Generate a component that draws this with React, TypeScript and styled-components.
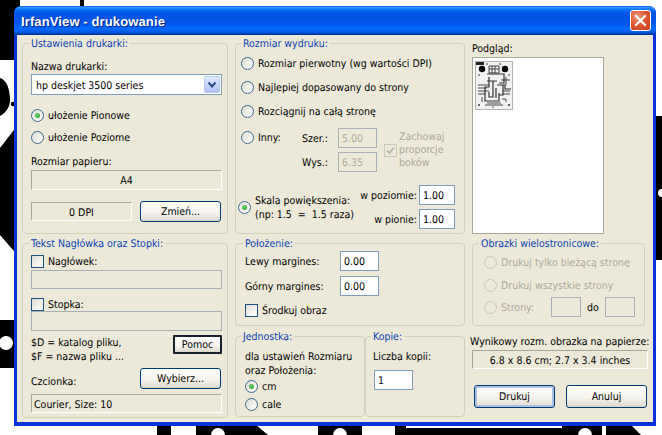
import React from "react";
import styled, { createGlobalStyle } from "styled-components";

const Global = createGlobalStyle`
  html, body { margin: 0; padding: 0; background: #fff; overflow: hidden; }
  * { box-sizing: border-box; }
`;

const Desktop = styled.div`
  position: relative;
  width: 662px;
  height: 435px;
  overflow: hidden;
  font-family: "DejaVu Sans Condensed", "DejaVu Sans", sans-serif;
  font-stretch: condensed;
  font-size: 10.5px;
  line-height: 14px;
  text-rendering: geometricPrecision;
  color: #000;
`;

const Wallpaper = styled.svg`
  position: absolute;
  inset: 0;
`;

const Win = styled.div`
  position: absolute;
  left: 14px;
  top: 6px;
  width: 642px;
  height: 420px;
  display: flex;
  flex-direction: column;
  background: #0831d9;
  border-radius: 7px 7px 0 0;
  overflow: hidden;
`;

const TitleBar = styled.div`
  height: 29px;
  flex: none;
  display: flex;
  align-items: center;
  justify-content: space-between;
  padding: 0 5px 0 7px;
  background: linear-gradient(180deg, #0058ee 0%, #3593ff 4%, #288eff 7%, #127dff 10%, #036ffc 14%, #0262ee 18%, #0057e5 24%, #0054e3 30%, #0055eb 56%, #005bf5 66%, #026afe 76%, #0062ef 86%, #0052d6 92%, #0040ab 96%, #003092 100%);
`;

const TitleText = styled.span`
  margin-top: 2px;
  font-family: "Liberation Sans", Arial, sans-serif;
  font-stretch: normal;
  font-weight: 700;
  font-size: 13px;
  letter-spacing: 0.12px;
  color: #fff;
  text-shadow: 1px 1px 1px #0a1f8f;
`;

const CloseButton = styled.div`
  width: 21px;
  height: 21px;
  display: flex;
  align-items: center;
  justify-content: center;
  border: 1px solid #fff;
  border-radius: 3px;
  background: radial-gradient(circle at 35% 30%, #ee9a7c 0%, #dd5a36 45%, #c63a17 100%);
`;

const Client = styled.div`
  flex: none;
  height: 387px;
  margin: 0 3px;
  padding: 2px 5px 0;
  display: flex;
  gap: 7px;
  background: #ece9d8;
`;

const Column = styled.div<{ $w: number; $gap?: number }>`
  width: ${(p) => p.$w}px;
  flex: none;
  display: flex;
  flex-direction: column;
  gap: ${(p) => p.$gap ?? 3}px;
`;

const Group = styled.fieldset<{ $h: number; $w?: number; $pad: number; $mt?: number }>`
  margin: ${(p) => p.$mt ?? 0}px 0 0;
  min-width: 0;
  height: ${(p) => p.$h}px;
  width: ${(p) => (p.$w ? `${p.$w}px` : "100%")};
  flex: none;
  padding: 0 0 0 ${(p) => p.$pad}px;
  border: 1px solid #d0d0bf;
  border-radius: 4px;
`;

const Legend = styled.legend<{ $x: number }>`
  margin-left: ${(p) => p.$x}px;
  padding: 0 2px;
  height: 12px;
  line-height: 14px;
  color: #0a3fb5;
`;

const Row = styled.div<{ $mt?: number; $h?: number; $w?: number }>`
  display: flex;
  align-items: center;
  margin-top: ${(p) => p.$mt ?? 0}px;
  height: ${(p) => p.$h ?? 14}px;
  ${(p) => (p.$w ? `width: ${p.$w}px;` : "")}
`;

const SpreadRow = styled(Row)`
  justify-content: space-between;
  align-items: flex-start;
`;

const Label = styled.div<{ $muted?: boolean; $w?: number; $end?: boolean; $ml?: number }>`
  white-space: nowrap;
  padding-top: 2px;
  color: ${(p) => (p.$muted ? "#aca899" : "#000")};
  margin-left: ${(p) => p.$ml ?? 0}px;
  ${(p) => (p.$w ? `width: ${p.$w}px; flex: none;` : "")}
  ${(p) => (p.$end ? "align-self: flex-end;" : "")}
`;

const Combo = styled.div`
  margin-top: 1px;
  height: 21px;
  width: 191px;
  display: flex;
  align-items: center;
  justify-content: space-between;
  background: #fff;
  border: 1px solid #7f9db9;
  padding: 0 1px 0 4px;
`;

const ComboText = styled.span`
  padding-top: 2px;
`;

const ComboArrow = styled.div`
  width: 16px;
  height: 17px;
  display: flex;
  align-items: center;
  justify-content: center;
  border-radius: 2px;
  border: 1px solid #b5c8ef;
  background: linear-gradient(180deg, #e1eafe 0%, #c3d3fb 60%, #aebff0 100%);
`;

const Static = styled.div<{ $w?: number; $h?: number; $left?: boolean; $mt?: number }>`
  width: ${(p) => p.$w ?? 191}px;
  height: ${(p) => p.$h ?? 20}px;
  margin-top: ${(p) => p.$mt ?? 0}px;
  flex: none;
  display: flex;
  align-items: center;
  justify-content: ${(p) => (p.$left ? "flex-start" : "center")};
  padding: 2px 2px 0;
  border: 1px solid;
  border-color: #aca899 #fff #fff #aca899;
  background: #ece9d8;
  white-space: nowrap;
`;

const Edit = styled.div<{ $w: number; $h?: number; $off?: boolean; $mt?: number; $ml?: number }>`
  width: ${(p) => p.$w}px;
  height: ${(p) => p.$h ?? 20}px;
  margin-top: ${(p) => p.$mt ?? 0}px;
  margin-left: ${(p) => p.$ml ?? 0}px;
  flex: none;
  display: flex;
  align-items: center;
  padding: 2px 3px 0;
  border: 1px solid ${(p) => (p.$off ? "#a9b0b4" : "#7f9db9")};
  background: ${(p) => (p.$off ? "#ece9d8" : "#fff")};
  color: ${(p) => (p.$off ? "#aca899" : "#000")};
`;

const Button = styled.div<{ $w?: number; $h?: number; $ml?: number; $mode?: "default" | "focus" }>`
  width: ${(p) => p.$w ?? 81}px;
  height: ${(p) => p.$h ?? 21}px;
  margin-left: ${(p) => p.$ml ?? 0}px;
  flex: none;
  display: flex;
  align-items: center;
  justify-content: center;
  padding-top: 1px;
  border: ${(p) => (p.$mode === "focus" ? "2px solid #16202a" : "1px solid #003c74")};
  border-radius: ${(p) => (p.$mode === "focus" ? "1px" : "3px")};
  background: linear-gradient(180deg, #fff 0%, #f5f4ee 55%, #e3e0d5 90%, #d6d0c5 100%);
  ${(p) => (p.$mode === "default" ? "box-shadow: inset 0 0 0 2px #a9bfe6;" : "")}
`;

const RadioOption = styled.div<{ $ml?: number; $w?: number }>`
  display: flex;
  align-items: center;
  gap: 4px;
  margin-left: ${(p) => p.$ml ?? 0}px;
  ${(p) => (p.$w ? `width: ${p.$w}px; flex: none;` : "")}
`;

const RadioMark = styled.span<{ $on?: boolean; $off?: boolean }>`
  width: 13px;
  height: 13px;
  flex: none;
  display: flex;
  align-items: center;
  justify-content: center;
  border-radius: 50%;
  border: 1px solid ${(p) => (p.$off ? "#cac8bb" : "#3d6a8c")};
  background: ${(p) => (p.$off ? "#ece9d8" : "linear-gradient(135deg, #dcdcd6 0%, #f4f3ee 60%, #fff 100%)")};
  &::after {
    content: "";
    display: ${(p) => (p.$on ? "block" : "none")};
    width: 5px;
    height: 5px;
    border-radius: 50%;
    background: radial-gradient(circle at 40% 40%, #64d064, #2aa02a);
  }
`;

const CheckMark = styled.span<{ $off?: boolean }>`
  width: 13px;
  height: 13px;
  flex: none;
  display: flex;
  align-items: center;
  justify-content: center;
  border: 1px solid ${(p) => (p.$off ? "#cac8bb" : "#1c5180")};
  background: ${(p) => (p.$off ? "#ece9d8" : "linear-gradient(135deg, #dcdcd6 0%, #f4f3ee 60%, #fff 100%)")};
`;

const OtherRow = styled.div`
  display: flex;
  margin-top: 10px;
  height: 44px;
`;

const OtherLead = styled.div`
  width: 61px;
  flex: none;
  height: 18px;
  display: flex;
  align-items: center;
`;

const SizeFields = styled.div`
  display: flex;
  flex-direction: column;
  gap: 4px;
  width: 75px;
  flex: none;
`;

const SizeField = styled.div`
  display: flex;
  align-items: center;
  justify-content: space-between;
`;

const KeepRatio = styled.div`
  display: flex;
  align-items: center;
  gap: 2px;
  margin-left: 7px;
`;

const RatioText = styled.div`
  color: #aca899;
  line-height: 13px;
`;

const ScaleRow = styled.div`
  display: flex;
  align-items: center;
  justify-content: space-between;
  margin: 13px 9px 0 -3px;
  height: 44px;
`;

const ScaleFields = styled.div`
  display: flex;
  flex-direction: column;
  gap: 4px;
  align-items: flex-end;
`;

const ScaleField = styled.div`
  display: flex;
  align-items: center;
  gap: 2px;
`;

const TwoLines = styled.div<{ $mt?: number }>`
  margin-top: ${(p) => p.$mt ?? 0}px;
  padding-top: 2px;
  line-height: 14px;
  white-space: nowrap;
`;

const Split = styled.div`
  display: flex;
  margin-top: 1px;
`;

const Preview = styled.div`
  width: 132px;
  height: 177px;
  margin-top: 2px;
  flex: none;
  padding: 3px 2px;
  background: #fff;
  border: 1px solid #aca899;
`;

const Thumb = styled.svg`
  display: block;
`;

const Actions = styled.div`
  display: flex;
  gap: 11px;
  margin: 16px 0 0 2px;
`;

const Kept = styled.div`
  margin-left: -2px;
`;

function Radio({ on, off, label, ml, w }: { on?: boolean; off?: boolean; label: React.ReactNode; ml?: number; w?: number }) {
  return (
    <RadioOption $ml={ml} $w={w}>
      <RadioMark $on={on} $off={off} />
      {typeof label === "string" ? <Label $muted={off}>{label}</Label> : label}
    </RadioOption>
  );
}

function Check({ label }: { label: string }) {
  return (
    <RadioOption>
      <CheckMark />
      <Label>{label}</Label>
    </RadioOption>
  );
}

function Wall() {
  return (
    <Wallpaper width="662" height="435" viewBox="0 0 662 435">
      <g fill="#000">
        <rect x="0" y="0" width="20" height="60" />
        <rect x="80" y="0" width="4" height="8" />
        <path d="M0 78 C7 80 10 90 10 100 C10 106 7 112 0 116 Z" />
        <circle cx="13" cy="104" r="2.2" />
        <path d="M20 122 L0 148 L0 235 L20 258 Z" />
        <path fillRule="evenodd" d="M0 320 H20 V368 H0 Z M6 336 a7 7 0 1 0 0.01 0 Z" />
        <rect x="656" y="116" width="6" height="144" />
        <path d="M157 420 H171 V435 H157 Z" />
        <path d="M196 420 H250 L268 435 H196 Z" />
        <path d="M318 420 H362 V435 H318 Z" />
        <rect x="395" y="428" width="170" height="7" />
        <rect x="395" y="420" width="11" height="15" />
        <path d="M562 420 H602 V435 H562 Z" />
        <path d="M606 420 H626 L641 435 H606 Z" />
      </g>
      <g fill="#fff">
        <circle cx="218" cy="435" r="7" />
        <circle cx="340" cy="435" r="7" />
        <circle cx="585" cy="435" r="7" />
        <circle cx="662" cy="193" r="4" />
      </g>
    </Wallpaper>
  );
}

function PcbThumb() {
  return (
    <Thumb width="38" height="49" viewBox="0 0 38 49">
      <rect x="0.5" y="0.5" width="37" height="48" fill="#f2f2f2" stroke="#b4b4b0" />
      <rect x="1" y="1" width="8" height="3" fill="#222" />
      <circle cx="7" cy="8" r="3.2" fill="#000" />
      <circle cx="30" cy="8" r="3.2" fill="#000" />
      <g fill="#222">
        <circle cx="12" cy="3" r="0.8" />
        <circle cx="25" cy="3" r="0.8" />
        <circle cx="4" cy="14" r="0.8" />
        <circle cx="34" cy="14" r="0.8" />
        <circle cx="4" cy="44" r="0.9" />
        <circle cx="34" cy="44" r="0.9" />
        <circle cx="18" cy="46" r="0.7" />
      </g>
      <g fill="none" stroke="#333" strokeWidth="1.2">
        <path d="M14 5 H24 V12 H14 Z M14 8 H24 M17 5 V12 M20 5 V12" strokeWidth="0.9" />
        <path d="M12 13 H29 V22 H24 M14 16 V26 H10 V40 H24 V32 M12 20 H22" />
        <path d="M3 24 H14 M3 27 H12 M3 30 H14 M3 33 H10" strokeWidth="0.9" />
        <path d="M18 20 V36 H14 V31 M22 24 H30 V28 H36 M28 24 V34 H24 M21 27 V37" />
        <path d="M28 30 H35 M28 33 H35 M26 19 H35 M31 16 V24" strokeWidth="0.9" />
        <path d="M7 41 V36 M10 44 H28 M27 38 H31 V41 M12 42 H26" strokeWidth="0.9" />
      </g>
    </Thumb>
  );
}

export default function App() {
  return (
    <>
      <Global />
      <Desktop>
        <Wall />
        <Win>
          <TitleBar>
            <TitleText>IrfanView - drukowanie</TitleText>
            <CloseButton>
              <svg width="13" height="13" viewBox="0 0 13 13">
                <path d="M2 2 L11 11 M11 2 L2 11" stroke="#fff" strokeWidth="2.2" strokeLinecap="square" />
              </svg>
            </CloseButton>
          </TitleBar>
          <Client>
            <Column $w={206}>
              <Group $h={197} $pad={8}>
                <Legend $x={-2}>Ustawienia drukarki:</Legend>
                <Row $mt={10}><Label>Nazwa drukarki:</Label></Row>
                <Combo>
                  <ComboText>hp deskjet 3500 series</ComboText>
                  <ComboArrow>
                    <svg width="10" height="8" viewBox="0 0 10 8">
                      <path d="M1.5 1.5 L5 5.5 L8.5 1.5" fill="none" stroke="#2d4a80" strokeWidth="2" />
                    </svg>
                  </ComboArrow>
                </Combo>
                <Row $mt={13}><Radio on label="ułożenie Pionowe" /></Row>
                <Row $mt={8}><Radio label="ułożenie Poziome" /></Row>
                <Row $mt={10}><Label>Rozmiar papieru:</Label></Row>
                <Static $mt={2}>A4</Static>
                <Row $mt={11} $h={21}>
                  <Static $w={101} $h={19}>0 DPI</Static>
                  <Button $ml={8}>Zmień...</Button>
                </Row>
              </Group>
              <Group $h={181} $pad={8}>
                <Legend $x={-2}>Tekst Nagłówka oraz Stopki:</Legend>
                <Row $mt={5}><Check label="Nagłówek:" /></Row>
                <Edit $w={191} $h={19} $off $mt={2} />
                <Row $mt={8}><Check label="Stopka:" /></Row>
                <Edit $w={191} $off />
                <SpreadRow $mt={4} $h={27} $w={191}>
                  <TwoLines $mt={-1}>
                    $D = katalog pliku,
                    <br />
                    $F = nazwa pliku ...
                  </TwoLines>
                  <Button $w={49} $h={19} $mode="focus">Pomoc</Button>
                </SpreadRow>
                <Row $mt={6} $h={21}>
                  <Label $w={109} $end>Czcionka:</Label>
                  <Button>Wybierz...</Button>
                </Row>
                <Static $mt={5} $h={19} $left>Courier, Size: 10</Static>
              </Group>
            </Column>

            <Column $w={230}>
              <Group $h={197} $pad={5}>
                <Legend $x={0}>Rozmiar wydruku:</Legend>
                <Row $mt={7}><Radio label="Rozmiar pierwotny (wg wartości DPI)" /></Row>
                <Row $mt={10}><Radio label="Najlepiej dopasowany do strony" /></Row>
                <Row $mt={10}><Radio label="Rozciągnij na całą stronę" /></Row>
                <OtherRow>
                  <OtherLead><Radio label="Inny:" /></OtherLead>
                  <SizeFields>
                    <SizeField><Label>Szer.:</Label><Edit $w={39} $off>5.00</Edit></SizeField>
                    <SizeField><Label>Wys.:</Label><Edit $w={39} $off>6.35</Edit></SizeField>
                  </SizeFields>
                  <KeepRatio>
                    <CheckMark $off>
                      <svg width="9" height="9" viewBox="0 0 9 9">
                        <path d="M1 4.5 L3.5 7 L8 1.5" fill="none" stroke="#b8b6a6" strokeWidth="1.8" />
                      </svg>
                    </CheckMark>
                    <RatioText>Zachowaj<br />proporcje<br />boków</RatioText>
                  </KeepRatio>
                </OtherRow>
                <ScaleRow>
                  <Radio on label={<TwoLines>Skala powiększenia:<br />(np: 1.5&nbsp; =&nbsp; 1.5 raza)</TwoLines>} />
                  <ScaleFields>
                    <ScaleField><Label>w poziomie:</Label><Edit $w={36}>1.00</Edit></ScaleField>
                    <ScaleField><Label>w pionie:</Label><Edit $w={36}>1.00</Edit></ScaleField>
                  </ScaleFields>
                </ScaleRow>
              </Group>
              <Group $h={89} $pad={9}>
                <Legend $x={-2}>Położenie:</Legend>
                <Row $mt={2} $h={20}><Label $w={95}>Lewy margines:</Label><Edit $w={39}>0.00</Edit></Row>
                <Row $mt={5} $h={20}><Label $w={95}>Górny margines:</Label><Edit $w={39}>0.00</Edit></Row>
                <Row $mt={7}><Check label="Środkuj obraz" /></Row>
              </Group>
              <Split>
                <Group $h={87} $w={130} $pad={9}>
                  <Legend $x={-4}>Jednostka:</Legend>
                  <TwoLines $mt={6}>dla ustawień Rozmiaru<br />oraz Położenia:</TwoLines>
                  <Row $mt={1}><Radio on label="cm" /></Row>
                  <Row $mt={4}><Radio label="cale" /></Row>
                </Group>
                <Group $h={87} $w={100} $pad={7}>
                  <Legend $x={-2}>Kopie:</Legend>
                  <Row $mt={7}><Label>Liczba kopii:</Label></Row>
                  <Edit $w={39} $mt={7} $ml={1}>1</Edit>
                </Group>
              </Split>
            </Column>

            <Column $w={176} $gap={0}>
              <Row $mt={4}><Label>Podgląd:</Label></Row>
              <Preview><PcbThumb /></Preview>
              <Group $h={89} $w={173} $pad={11} $mt={3}>
                <Legend $x={-5}>Obrazki wielostronicowe:</Legend>
                <Row $mt={6}><Radio off label="Drukuj tylko bieżącą stronę" /></Row>
                <Row $mt={9}><Radio off label="Drukuj wszystkie strony" /></Row>
                <Row $mt={5} $h={20}>
                  <Radio off w={67} label="Strony:" />
                  <Edit $w={30} $off />
                  <Label $w={18} $ml={6}>do</Label>
                  <Edit $w={30} $off />
                </Row>
              </Group>
              <Kept>
                <Row $mt={8}><Label>Wynikowy rozm. obrazka na papierze:</Label></Row>
              </Kept>
              <Static $w={176} $h={19} $mt={2}>6.8 x 8.6 cm; 2.7 x 3.4 inches</Static>
              <Actions>
                <Button $w={81} $h={23} $mode="default">Drukuj</Button>
                <Button $w={81} $h={23}>Anuluj</Button>
              </Actions>
            </Column>
          </Client>
        </Win>
      </Desktop>
    </>
  );
}
